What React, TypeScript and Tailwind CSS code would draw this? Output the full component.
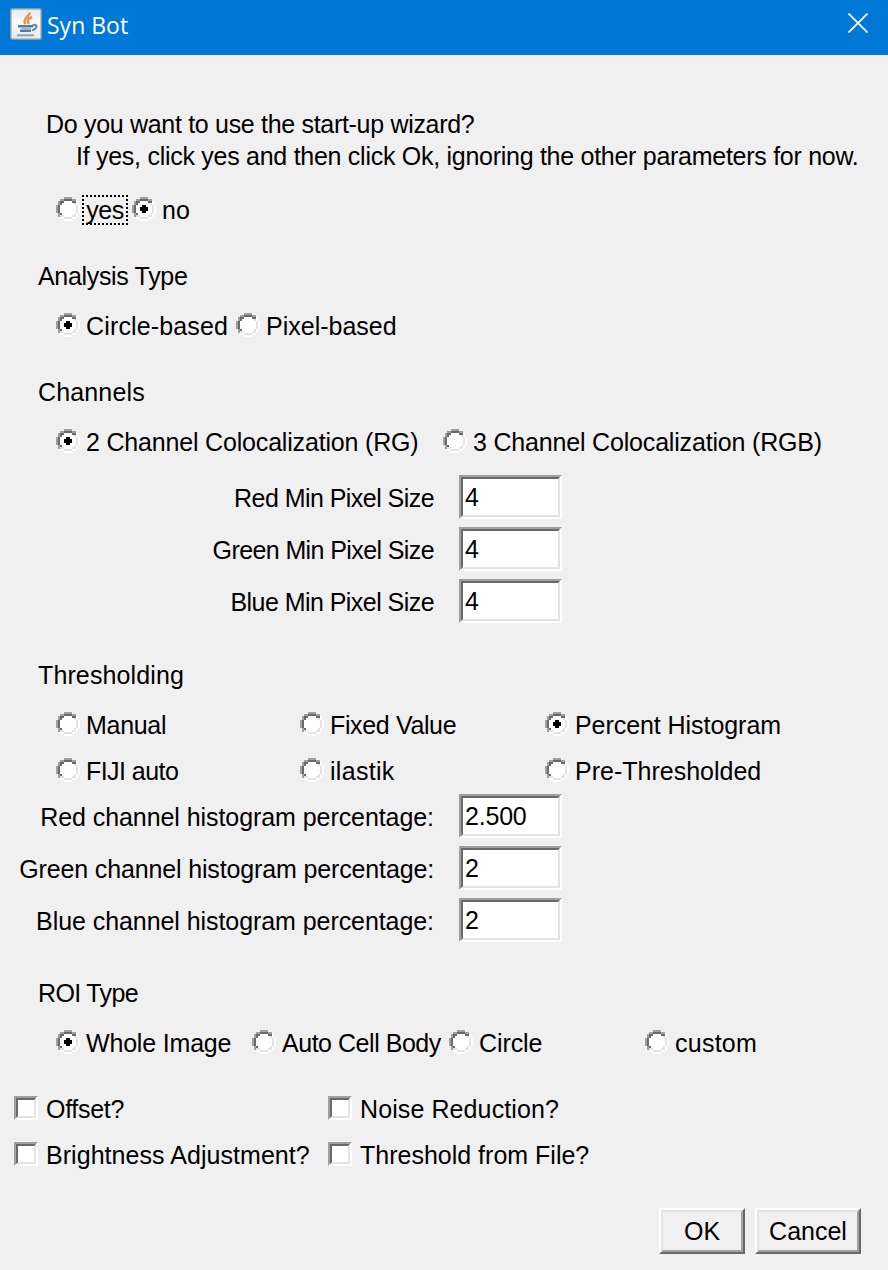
import type { ReactNode } from "react";

function Radio({ on = false }: { on?: boolean }) {
  return (
    <svg className="mr-[6px] h-6 w-6 shrink-0 -translate-y-px" viewBox="0 0 12 12" shapeRendering="crispEdges">
      <path d="M4 1h4v1h2v2h1v4h-1v2H8v1H4v-1H2V8H1V4h1V2h2z" fill="#fff" />
      <path d="M4 0h4v1H4zM2 1h2v1H2zM8 1h2v1H8zM1 2h1v2H1zM0 4h1v4H0zM1 8h1v2H1z" fill="#a0a0a0" />
      <path d="M4 1h4v1H4zM2 2h2v1H2zM8 2h2v1H8zM2 3h1v1H2zM1 4h1v4H1zM2 8h1v1H2z" fill="#696969" />
      <path d="M9 3h1v1H9zM10 4h1v4h-1zM9 8h1v1H9zM8 9h2v1H8zM4 10h4v1H4zM2 9h2v1H2z" fill="#e3e3e3" />
      <path d="M10 2h1v2h-1zM11 4h1v4h-1zM10 8h1v2h-1zM8 10h2v1H8zM4 11h4v1H4zM2 10h2v1H2z" fill="#fff" />
      {on && <path d="M5 4h2v1h1v2H7v1H5V7H4V5h1z" fill="#000" />}
    </svg>
  );
}

function Option({ children, on, className = "" }: { children: ReactNode; on?: boolean; className?: string }) {
  return (
    <label className={`flex shrink-0 items-center ${className}`}>
      <Radio on={on} />
      <span>{children}</span>
    </label>
  );
}

function Check({ children, className = "" }: { children: ReactNode; className?: string }) {
  return (
    <label className={`flex shrink-0 items-center ${className}`}>
      <span className="mr-[8px] h-6 w-6 -translate-y-px border-2 border-t-[#a0a0a0] border-r-white border-b-white border-l-[#a0a0a0]">
        <span className="block h-full w-full border-2 border-t-[#696969] border-r-[#e3e3e3] border-b-[#e3e3e3] border-l-[#696969] bg-white" />
      </span>
      <span>{children}</span>
    </label>
  );
}

function Field({ label, value, className = "" }: { label: string; value: string; className?: string }) {
  return (
    <div className="flex h-11 items-center">
      <span className={`w-[434px] pt-[2px] text-right ${className}`}>{label}</span>
      <span className="ml-[25px] h-11 w-[103px] border-2 border-t-[#a0a0a0] border-r-white border-b-white border-l-[#a0a0a0]">
        <span className="flex h-full items-center border-2 border-t-[#696969] border-r-[#e3e3e3] border-b-[#e3e3e3] border-l-[#696969] bg-white pl-[2px] tracking-[-0.2px]">
          {value}
        </span>
      </span>
    </div>
  );
}

function Button({ children, className }: { children: ReactNode; className: string }) {
  return (
    <button className={`h-[46px] border-2 border-t-white border-r-[#696969] border-b-[#696969] border-l-white ${className}`}>
      <span className="flex h-full items-center justify-center border-2 border-t-[#e3e3e3] border-r-[#a0a0a0] border-b-[#a0a0a0] border-l-[#e3e3e3]">
        {children}
      </span>
    </button>
  );
}

function Title({ children, className }: { children: ReactNode; className: string }) {
  return <h2 className={`h-8 pl-[38px] ${className}`}>{children}</h2>;
}

function JavaIcon() {
  return (
    <svg className="h-8 w-8" viewBox="0 0 32 32" fill="none">
      <defs>
        <linearGradient id="tile" x1="0" y1="0" x2="0" y2="1">
          <stop offset="0" stopColor="#e4e8ea" />
          <stop offset="0.4" stopColor="#fafafa" />
          <stop offset="1" stopColor="#e6e9eb" />
        </linearGradient>
      </defs>
      <rect x="0.75" y="0.75" width="30.5" height="30.5" rx="1.5" fill="url(#tile)" stroke="#8298a6" strokeWidth="1.5" />
      <path d="M19.500 4.500c1 4-8 5.500-4 11.500M22 9c-5 2-5 4-3 7" stroke="#e8954f" strokeWidth="2.6" />
      <path d="M8 18.200h15M10 22.700h11" stroke="#567b99" strokeWidth="2.4" />
      <path d="M11 20.500h10" stroke="#a9bac7" strokeWidth="2" />
      <path d="M7 27.300h17" stroke="#8ba3b5" strokeWidth="2" />
      <path d="M22.500 17.500c5-2.500 5.500 3-.5 5" stroke="#6f8da5" strokeWidth="2.200" />
    </svg>
  );
}

export default function App() {
  return (
    <main className="h-[1270px] w-[888px] overflow-hidden bg-[#f0f0f0] font-['Liberation_Sans',Arial,sans-serif] text-[25px] leading-8 whitespace-nowrap text-black">
      <header className="flex h-[55px] items-start bg-[#0078d7] pt-2 pl-[10px] text-white">
        <JavaIcon />
        <h1 className="ml-[5px] pt-px font-['Open_Sans','Noto_Sans',sans-serif] text-[23px]">Syn Bot</h1>
        <svg className="mt-[5px] mr-5 ml-auto h-5 w-5" viewBox="0 0 20 20" stroke="white" strokeWidth="1.7">
          <path d="M.5.500l19 19M19.500.500l-19 19" />
        </svg>
      </header>

      <p className="mt-[53px] h-8 pl-[46px] tracking-[-0.31px]">Do you want to use the start-up wizard?</p>
      <p className="h-8 pl-[76px] tracking-[-0.275px]">If yes, click yes and then click Ok, ignoring the other parameters for now.</p>
      <div className="mt-[22px] flex h-8 pl-[56px]">
        <label className="flex w-[76px] items-center">
          <Radio />
          <span className="-ml-[4px] flex h-[30px] w-[46px] shrink-0 items-center justify-center border-2 border-dotted border-black tracking-[-0.5px]">
            yes
          </span>
        </label>
        <Option on>no</Option>
      </div>

      <Title className="mt-[34px] tracking-[-0.33px]">Analysis Type</Title>
      <div className="mt-[18px] flex h-8 pl-[56px]">
        <Option on className="w-[180px] tracking-[0.15px]">Circle-based</Option>
        <Option>Pixel-based</Option>
      </div>

      <Title className="mt-[34px] tracking-[0.15px]">Channels</Title>
      <div className="mt-[18px] flex h-8 pl-[56px]">
        <Option on className="w-[387px] tracking-[-0.18px]">2 Channel Colocalization (RG)</Option>
        <Option className="tracking-[-0.18px]">3 Channel Colocalization (RGB)</Option>
      </div>
      <div className="mt-[17px] flex flex-col gap-2">
        <Field className="tracking-[-0.55px]" label="Red Min Pixel Size" value="4" />
        <Field className="tracking-[-0.6px]" label="Green Min Pixel Size" value="4" />
        <Field className="tracking-[-0.55px]" label="Blue Min Pixel Size" value="4" />
      </div>

      <Title className="mt-9 tracking-[0.12px]">Thresholding</Title>
      <div className="mt-[18px] grid grid-cols-[244px_245px_1fr] gap-y-[14px] pl-[56px]">
        <Option className="tracking-[-0.3px]">Manual</Option>
        <Option className="tracking-[-0.36px]">Fixed Value</Option>
        <Option on className="tracking-[-0.06px]">Percent Histogram</Option>
        <Option className="tracking-[-0.55px]">FIJI auto</Option>
        <Option className="tracking-[0.3px]">ilastik</Option>
        <Option>Pre-Thresholded</Option>
      </div>
      <div className="mt-[7px] flex flex-col gap-2">
        <Field className="tracking-[-0.07px]" label="Red channel histogram percentage:" value="2.500" />
        <Field className="tracking-[-0.14px]" label="Green channel histogram percentage:" value="2" />
        <Field className="tracking-[-0.07px]" label="Blue channel histogram percentage:" value="2" />
      </div>

      <Title className="mt-[35px] tracking-[-0.65px]">ROI Type</Title>
      <div className="mt-[18px] flex h-8 pl-[56px]">
        <Option on className="w-[196px] tracking-[-0.18px]">Whole Image</Option>
        <Option className="w-[197px] tracking-[-0.47px]">Auto Cell Body</Option>
        <Option className="w-[196px] tracking-[-0.1px]">Circle</Option>
        <Option className="tracking-[0.25px]">custom</Option>
      </div>

      <div className="mt-[34px] grid grid-cols-[314px_1fr] gap-y-[14px] pl-[14px]">
        <Check className="tracking-[-0.3px]">Offset?</Check>
        <Check className="tracking-[0.1px]">Noise Reduction?</Check>
        <Check className="tracking-[0.05px]">Brightness Adjustment?</Check>
        <Check>Threshold from File?</Check>
      </div>

      <footer className="mt-[37px] flex justify-end gap-[10px] pr-[27px]">
        <Button className="w-[86px]">OK</Button>
        <Button className="w-[106px]">Cancel</Button>
      </footer>
    </main>
  );
}
